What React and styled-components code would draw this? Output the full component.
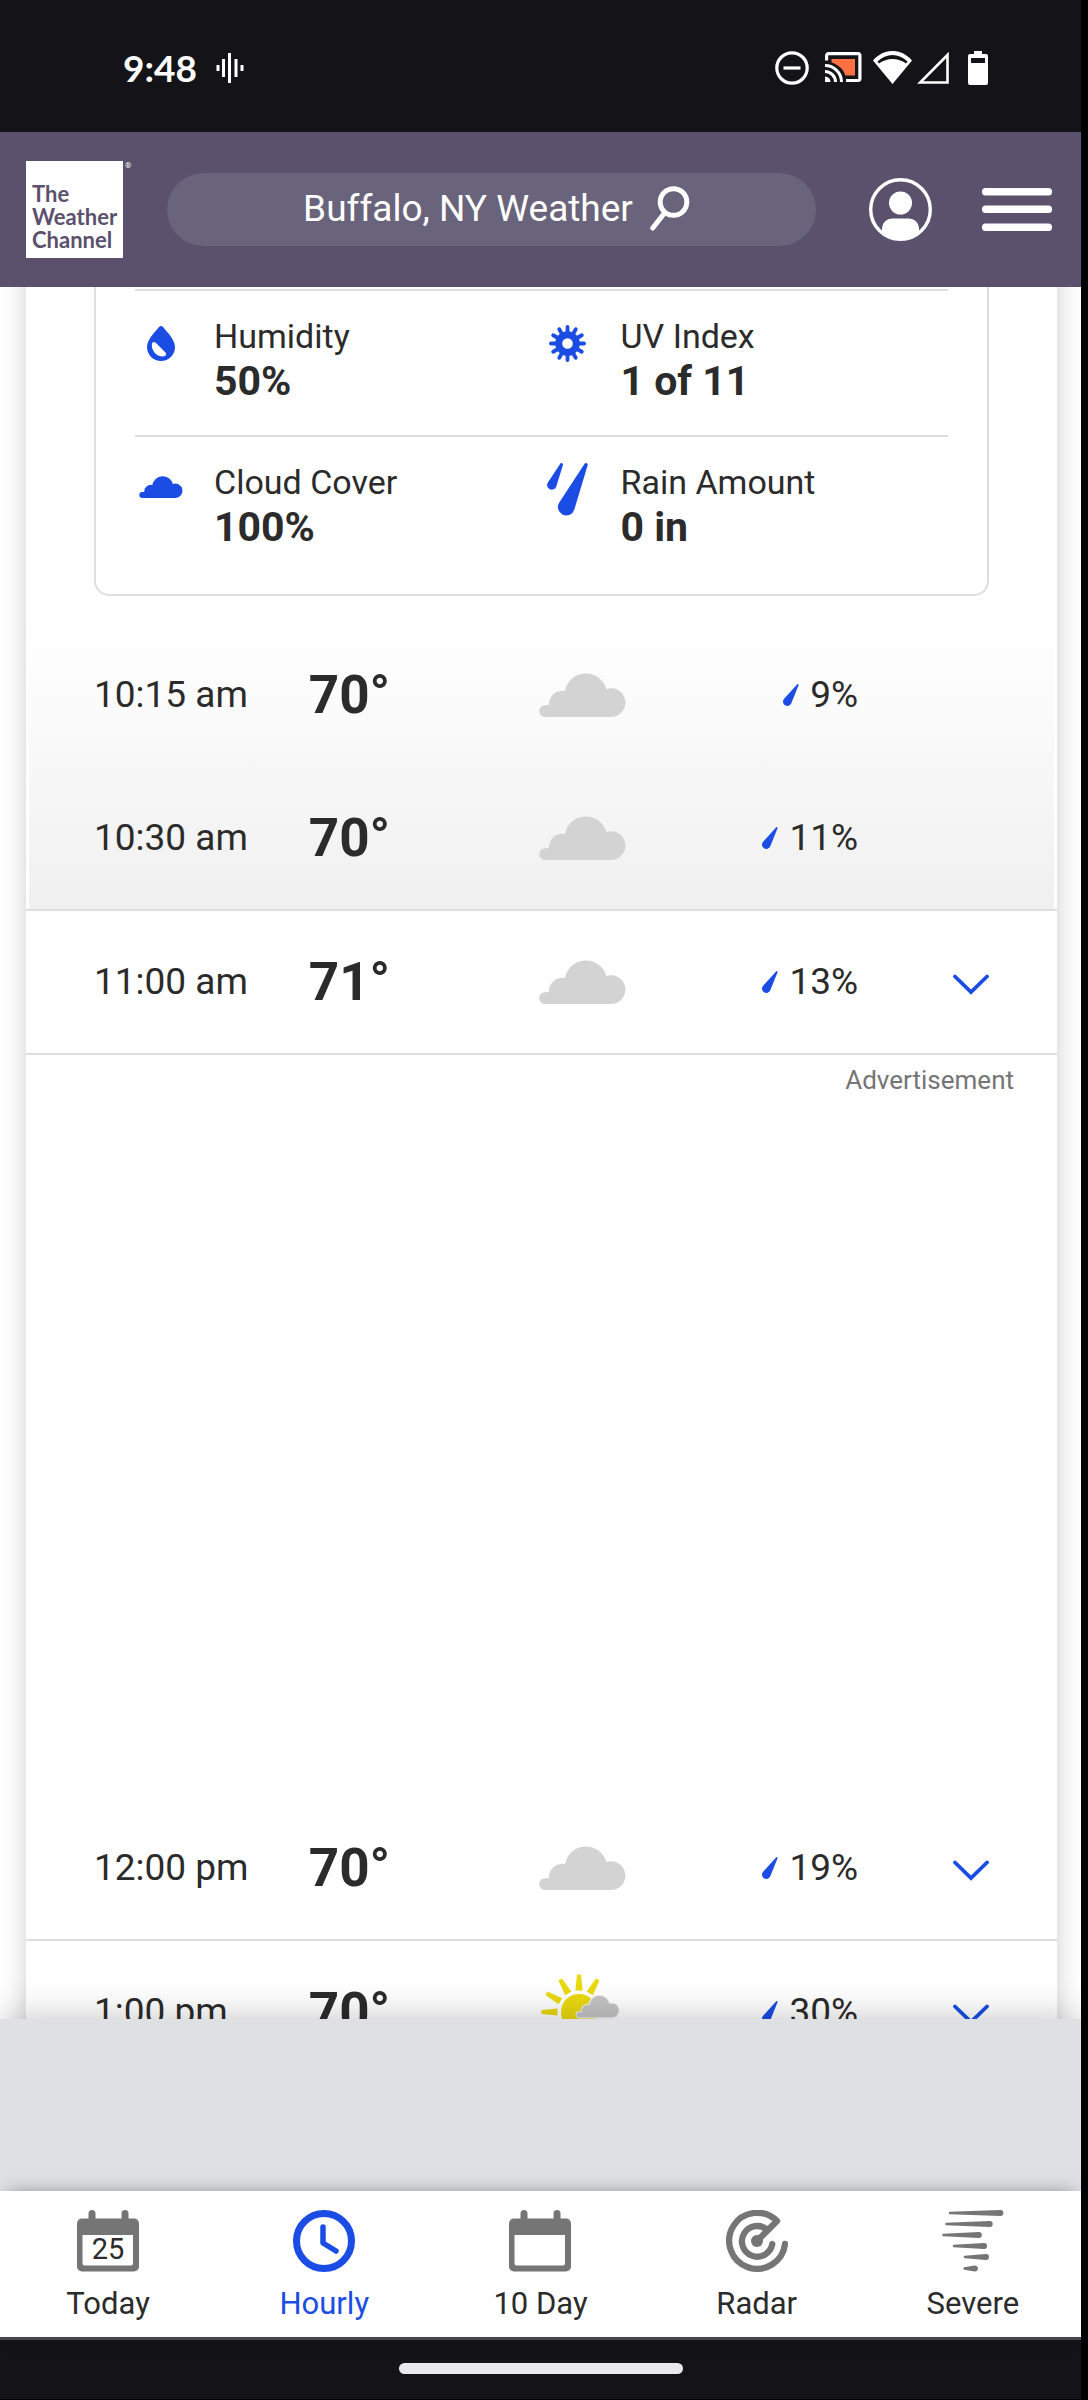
import React from "react";
import styled, { createGlobalStyle } from "styled-components";

const c = {
  ink: "#2b2b2b",
  blue: "#1b4de4",
  line: "#dedede",
  purple: "#5b516d",
  dark: "#141318",
  grey: "#757575",
  cloud: "#d3d3d3",
};

const GlobalStyle = createGlobalStyle`
  *, *::before, *::after { box-sizing: border-box; }
  body { margin: 0; background: #000; color: ${c.ink}; font-family: Roboto, "Liberation Sans", sans-serif; }
  button { font: inherit; color: inherit; background: none; border: 0; padding: 0; cursor: pointer; }
  a { color: inherit; text-decoration: none; }
  ul, dl, dd, p { margin: 0; padding: 0; list-style: none; }
  svg { display: block; flex: none; }
`;

/* Outline of a round-ended stroke that tapers from radius r1 to radius r2. */
function taper(x1, y1, r1, x2, y2, r2) {
  const d = Math.hypot(x2 - x1, y2 - y1);
  const a = Math.atan2(y2 - y1, x2 - x1);
  const b = Math.acos((r1 - r2) / d);
  const p = (x, y, r, t) => `${(x + r * Math.cos(t)).toFixed(2)} ${(y + r * Math.sin(t)).toFixed(2)}`;
  return `M${p(x1, y1, r1, a + b)} A${r1} ${r1} 0 0 1 ${p(x1, y1, r1, a - b)} L${p(x2, y2, r2, a - b)} A${r2} ${r2} 0 1 1 ${p(x2, y2, r2, a + b)} Z`;
}

const CLOUD = "M6 44A5.900 5.900 0 0 1 6 32.200L10 32A13.400 13.400 0 0 1 26 18A21.200 21.200 0 0 1 67.300 16A14.400 14.400 0 1 1 72.600 44Z";

const VoiceIcon = () => (
  <svg width="28" height="30" viewBox="0 0 28 30" stroke="#fff" strokeWidth="3">
    <path d="M2 12v6M7.500 6v18M13.500 0v30M20 6v18M26 12v6" />
  </svg>
);
const DndIcon = () => (
  <svg width="34" height="34" viewBox="0 0 34 34" fill="none" stroke="#fff" strokeWidth="3.200">
    <circle cx="17" cy="17" r="15.200" /><path d="M8.500 17h17" />
  </svg>
);
const CastIcon = () => (
  <svg width="37" height="31" viewBox="0 0 37 31" fill="none">
    <path d="M6.500 7H30v16.500H20.500C18 16.500 13 12.500 6.500 10.500Z" fill="#ff7043" />
    <g stroke="#fff" strokeWidth="3">
      <path d="M1.600 8.500V3.600a2 2 0 0 1 2-2H32.900a2 2 0 0 1 2 2V26.500a2 2 0 0 1-2 2H21" strokeWidth="3.200" />
      <path d="M0 19.500A10.500 10.500 0 0 1 10.500 30M0 13.500A16.500 16.500 0 0 1 16.500 30" />
    </g>
    <path d="M0 24.500A5.500 5.500 0 0 1 5.500 30H0Z" fill="#fff" />
  </svg>
);
const WifiIcon = () => (
  <svg width="39" height="33" viewBox="0 0 39 33" fill="#fff">
    <path fillRule="evenodd" d="M0 9.500C11-3.200 28-3.200 39 9.500L19.500 33ZM4.500 10.500L6 12.500C14 6.500 25 6.500 33 12.500L34.500 10.500C26 1.800 13 1.800 4.500 10.500Z" />
  </svg>
);
const SignalIcon = () => (
  <svg width="32" height="33" viewBox="0 0 32 33" fill="none" stroke="#fff" strokeWidth="2.600">
    <path d="M3.200 31.500H30.500V4Z" />
  </svg>
);
const BatteryIcon = () => (
  <svg width="20" height="34" viewBox="0 0 20 34" fill="#fff">
    <path fillRule="evenodd" d="M6 0h8v3h4a2 2 0 0 1 2 2v27a2 2 0 0 1-2 2H2a2 2 0 0 1-2-2V5a2 2 0 0 1 2-2h4ZM3 7v5h14V7Z" />
  </svg>
);
const SearchIcon = () => (
  <svg width="40" height="45" viewBox="0 0 40 45" fill="none" stroke="#fff" strokeWidth="5">
    <circle cx="23.500" cy="16" r="13.300" /><path d="M14.500 27L2.800 42" strokeLinecap="round" />
  </svg>
);
const ProfileIcon = () => (
  <svg width="63" height="63" viewBox="0 0 63 63" fill="#fff">
    <circle cx="31.500" cy="31.500" r="29.800" fill="none" stroke="#fff" strokeWidth="3.400" />
    <circle cx="31.500" cy="25" r="11.500" />
    <path d="M13 54V50a10 10 0 0 1 10-9.500H40A10 10 0 0 1 50 50V54A30 30 0 0 1 13 54Z" />
  </svg>
);
const MenuIcon = () => (
  <svg width="70" height="43" viewBox="0 0 70 43" fill="#fff">
    {[0, 17.5, 35.500].map((y) => <rect key={y} y={y} width="70" height="7.400" rx="3.500" />)}
  </svg>
);
const HumidityIcon = () => (
  <svg width="28" height="35" viewBox="0 0 28 35" fill={c.blue}>
    <path fillRule="evenodd" d="M12 1Q14-1 16 1C20 6 28 13.500 28 21A14 14 0 0 1 0 21C0 13.500 8 6 12 1ZM5 17.500C4 23 8 30.500 16 30.500Q20.500 29.500 18.500 26.500L9 17Q6.500 15 5 17.500Z" />
  </svg>
);
const UvIcon = () => (
  <svg width="37" height="37" viewBox="-18.500 -18.500 37 37">
    <g fill="none" stroke={c.blue}>
      <circle r="8.800" strokeWidth="7" />
      <g strokeWidth="3.800" strokeLinecap="round">
        {[...Array(12)].map((_, i) => <path key={i} d="M0-9V-16.500" transform={`rotate(${i * 30})`} />)}
      </g>
    </g>
  </svg>
);
const CoverIcon = () => (
  <svg width="44" height="27" viewBox="0 0 87 54" fill={c.blue}><path d={CLOUD} /></svg>
);
const RainIcon = () => (
  <svg width="41" height="53" viewBox="0 0 41 53" fill={c.blue}>
    <path d={taper(14.5, 1.5, 1.5, 4.8, 22, 4.7)} /><path d={taper(39, 1.8, 1.7, 19.3, 44, 8.4)} />
  </svg>
);
const DropIcon = () => (
  <svg width="16" height="22" viewBox="0 0 16 22" fill={c.blue}><path d={taper(14.7, 1, 0.9, 4.3, 17.6, 4.3)} /></svg>
);
const ChevronIcon = () => (
  <svg width="36" height="26" viewBox="0 0 36 26" fill="none" stroke={c.blue} strokeWidth="3.800" strokeLinecap="round">
    <path d="M2 7.500L18 23L34 7.500" />
  </svg>
);
const CloudyIcon = () => (
  <svg width="87" height="44" viewBox="0 0 87 44" fill={c.cloud} role="img" aria-label="Cloudy"><path d={CLOUD} /></svg>
);
const PartlyIcon = () => (
  <svg width="87" height="78" viewBox="-40 -39 87 78" role="img" aria-label="Partly cloudy">
    <g fill="#ead90f">
      <circle r="18" />
      {[-150, -120, -90, -60, -30, 0, 30].map((a) => (
        <path key={a} d="M-3.600-21.500L-2-37.500H2L3.600-21.500Z" transform={`rotate(${a})`} />
      ))}
    </g>
    <path d={CLOUD} transform="translate(-3 -17) scale(.5 .52)" fill="#c4c4c4" stroke="#f2f2f2" strokeWidth="2" />
  </svg>
);

const CalendarIcon = ({ day }) => (
  <svg width="62" height="62" viewBox="0 0 62 62">
    <path d="M15 3.500V12M48 3.500V12" stroke={c.grey} strokeWidth="7" strokeLinecap="round" />
    <path fill={c.grey} fillRule="evenodd" d="M5 8.500H57a5 5 0 0 1 5 5V56.500a5 5 0 0 1-5 5H5a5 5 0 0 1-5-5V13.500a5 5 0 0 1 5-5ZM5.500 25V53.500a2 2 0 0 0 2 2H54a2 2 0 0 0 2-2V25Z" />
    {day && <text x="31" y="49" textAnchor="middle" fontSize="29" fill={c.ink}>{day}</text>}
  </svg>
);
const ClockIcon = () => (
  <svg width="62" height="62" viewBox="0 0 62 62" fill="none" stroke={c.blue}>
    <circle cx="31" cy="31" r="27.500" strokeWidth="7" />
    <path d="M30 17V33L43 41" strokeWidth="5.500" strokeLinecap="round" strokeLinejoin="round" />
  </svg>
);
const RadarIcon = () => (
  <svg width="62" height="62" viewBox="0 0 62 62" fill="none" stroke={c.grey} strokeWidth="6.300" strokeLinecap="round" strokeLinejoin="round">
    <path d="M31 31L51 11A28 28 0 1 0 59 34M41.500 20A15.300 15.300 0 1 0 46.300 34" />
    <circle cx="31" cy="31" r="6" fill={c.grey} stroke="none" />
  </svg>
);
const SevereIcon = () => (
  <svg width="62" height="62" viewBox="0 0 62 62" fill={c.grey}>
    {[[8, 58.5, 3], [4.5, 47.8, 14], [1.5, 37, 25], [12, 42, 36], [23, 44, 47], [22.5, 33, 58.5]].map(([a, b, y]) => (
      <path key={y} d={taper(a, y, 1.2, b, y, 3)} />
    ))}
  </svg>
);

const Screen = styled.div`
  display: flex;
  flex-direction: column;
  height: 100vh;
  margin-right: 7px;
  background: #fff;
`;
const StatusBar = styled.div`
  display: flex;
  align-items: center;
  justify-content: space-between;
  flex: none;
  height: 132px;
  padding: 3px 93px 0 123px;
  background: ${c.dark};
  color: #fff;
`;
const StatusGroup = styled.div`
  display: flex;
  align-items: center;
  gap: ${(p) => p.$gap}px;
`;
const Clock = styled.span`
  font: 700 37px/44px Lato, Roboto, sans-serif;
`;
const Header = styled.header`
  display: flex;
  align-items: center;
  flex: none;
  height: 155px;
  padding: 0 29px 0 26px;
  background: ${c.purple};
  color: #fff;
`;
const Logo = styled.a`
  position: relative;
  display: flex;
  align-items: flex-end;
  flex: none;
  width: 97px;
  height: 97px;
  padding: 0 0 7px 6px;
  background: #fff;
  && { color: ${c.purple}; }
  font: 700 22px/23px Lato, "Noto Sans", sans-serif;
`;
const Registered = styled.sup`
  position: absolute;
  left: 99px;
  top: 0;
  font: 8px/9px Roboto, sans-serif;
  color: #fff;
`;
const SearchBar = styled.button`
  display: flex;
  align-items: center;
  justify-content: center;
  flex: 1;
  gap: 17px;
  height: 73px;
  margin: 0 53px 0 44px;
  border-radius: 37px;
  && {
    padding: 0 0 2px 10px;
    background: #69647b;
    color: #fff;
    font-size: 37px;
    line-height: 44px;
  }
`;
const HeaderActions = styled.div`
  display: flex;
  align-items: center;
  gap: 50px;
`;
const Main = styled.main`
  flex: 1;
  min-height: 0;
  overflow: hidden;
  padding: 0 24px 0 26px;
`;
const Card = styled.section`
  margin-top: -60px;
  padding-top: 60px;
  background: #fff;
  box-shadow: 0 0 24px rgba(0, 0, 0, 0.2);
`;
const Details = styled.dl`
  margin: 0 68px 27px;
  padding: 2px 39px 13px;
  border: solid ${c.line};
  border-width: 0 2px 2px;
  border-radius: 0 0 15px 15px;
`;
const DetailRow = styled.div`
  display: grid;
  grid-template-columns: 1fr 1fr;
  border-top: 2px solid ${c.line};
`;
const Detail = styled.div`
  display: flex;
  gap: 27px;
  padding: 23px 0 30px;
`;
const DetailIcon = styled.span`
  display: flex;
  align-items: center;
  justify-content: center;
  width: 52px;
  height: 52px;
  margin-top: 3px;
`;
const DetailLabel = styled.dt`
  font-size: 34px;
  line-height: 44px;
`;
const DetailValue = styled.dd`
  font-size: 41px;
  font-weight: 700;
  line-height: 47px;
`;
const QuarterHours = styled.div`
  padding: 0 3px;
  border-bottom: 2px solid ${c.line};
`;
const HourList = styled.ul`
  background: ${(p) => (p.$shaded ? "linear-gradient(#fff, #f0f0f0)" : "none")};
`;
const HourRow = styled.li`
  display: grid;
  grid-template-columns: 215fr 231fr 87px 232fr 131fr;
  align-items: center;
  height: ${(p) => (p.$last ? 142 : 144)}px;
  padding: 0 ${(p) => (p.$inset ? 65 : 68)}px;
  border-bottom: ${(p) => (p.$inset ? "0" : `2px solid ${c.line}`)};
`;
const Time = styled.span`
  font-size: 37px;
  line-height: 44px;
`;
const Temp = styled.span`
  font-size: 53px;
  font-weight: 700;
  line-height: 60px;
`;
const Precip = styled.span`
  display: flex;
  align-items: center;
  justify-content: flex-end;
  gap: 11px;
  font-size: 37px;
  line-height: 44px;
`;
const Toggle = styled.button`
  justify-self: end;
`;
const AdSlot = styled.aside`
  height: 742px;
  padding: 8px 43px;
  color: ${c.grey};
  font-size: 26px;
  line-height: 34px;
  text-align: right;
`;
const StickyAd = styled.aside`
  position: relative;
  flex: none;
  height: 172px;
  background: #dee0e4;
  box-shadow: 0 0 36px rgba(0, 0, 0, 0.24);
`;
const TabBar = styled.nav`
  position: relative;
  display: grid;
  grid-template-columns: repeat(5, 1fr);
  flex: none;
  height: 149px;
  background: #fff;
  border-bottom: 3px solid #47464b;
  box-shadow: 0 -4px 18px -8px rgba(0, 0, 0, 0.5);
`;
const Tab = styled.a`
  display: flex;
  flex-direction: column;
  align-items: center;
  gap: 14px;
  padding-top: 19px;
  font-size: 31px;
  line-height: 36px;
  && { color: ${(p) => (p.$active ? c.blue : c.ink)}; }
`;
const GestureBar = styled.div`
  display: flex;
  justify-content: center;
  flex: none;
  height: 60px;
  padding-top: 23px;
  background: ${c.dark};
  border-bottom: 1px solid #000;
`;
const Handle = styled.span`
  width: 284px;
  height: 11px;
  border-radius: 6px;
  background: #e9e9eb;
`;

const details = [
  [
    { label: "Humidity", value: "50%", Icon: HumidityIcon },
    { label: "UV Index", value: "1 of 11", Icon: UvIcon },
  ],
  [
    { label: "Cloud Cover", value: "100%", Icon: CoverIcon },
    { label: "Rain Amount", value: "0 in", Icon: RainIcon },
  ],
];

const tabs = [
  { label: "Today", icon: <CalendarIcon day="25" /> },
  { label: "Hourly", icon: <ClockIcon />, active: true },
  { label: "10 Day", icon: <CalendarIcon /> },
  { label: "Radar", icon: <RadarIcon /> },
  { label: "Severe", icon: <SevereIcon /> },
];

function Hour({ time, temp, rain, Sky = CloudyIcon, inset, last }) {
  return (
    <HourRow $inset={inset} $last={last}>
      <Time>{time}</Time>
      <Temp>{temp}°</Temp>
      <Sky />
      <Precip><DropIcon />{rain}%</Precip>
      {!inset && <Toggle type="button" aria-label={`Show details for ${time}`}><ChevronIcon /></Toggle>}
    </HourRow>
  );
}

export default function App() {
  return (
    <>
      <GlobalStyle />
      <Screen>
        <StatusBar>
          <StatusGroup $gap={19}><Clock>9:48</Clock><VoiceIcon /></StatusGroup>
          <StatusGroup $gap={19}>
            <StatusGroup $gap={16}>
              <DndIcon />
              <StatusGroup $gap={11}>
                <CastIcon />
                <StatusGroup $gap={5}><WifiIcon /><SignalIcon /></StatusGroup>
              </StatusGroup>
            </StatusGroup>
            <BatteryIcon />
          </StatusGroup>
        </StatusBar>
        <Header>
          <Logo href="#home">
            <span>The<br />Weather<br />Channel</span>
            <Registered>®</Registered>
          </Logo>
          <SearchBar type="button">Buffalo, NY Weather<SearchIcon /></SearchBar>
          <HeaderActions>
            <button type="button" aria-label="Account"><ProfileIcon /></button>
            <button type="button" aria-label="Menu"><MenuIcon /></button>
          </HeaderActions>
        </Header>
        <Main>
          <Card>
            <Details>
              {details.map((row) => (
                <DetailRow key={row[0].label}>
                  {row.map(({ label, value, Icon }) => (
                    <Detail key={label}>
                      <DetailIcon><Icon /></DetailIcon>
                      <div>
                        <DetailLabel>{label}</DetailLabel>
                        <DetailValue>{value}</DetailValue>
                      </div>
                    </Detail>
                  ))}
                </DetailRow>
              ))}
            </Details>
            <QuarterHours>
              <HourList $shaded>
                <Hour time="10:15 am" temp={70} rain={9} inset />
                <Hour time="10:30 am" temp={70} rain={11} inset last />
              </HourList>
            </QuarterHours>
            <HourList>
              <Hour time="11:00 am" temp={71} rain={13} />
            </HourList>
            <AdSlot>Advertisement</AdSlot>
            <HourList>
              <Hour time="12:00 pm" temp={70} rain={19} />
              <Hour time="1:00 pm" temp={70} rain={30} Sky={PartlyIcon} />
            </HourList>
          </Card>
        </Main>
        <StickyAd aria-label="Sponsored" />
        <TabBar>
          {tabs.map((t) => (
            <Tab key={t.label} href={`#${t.label}`} $active={t.active}>
              {t.icon}
              {t.label}
            </Tab>
          ))}
        </TabBar>
        <GestureBar><Handle /></GestureBar>
      </Screen>
    </>
  );
}
